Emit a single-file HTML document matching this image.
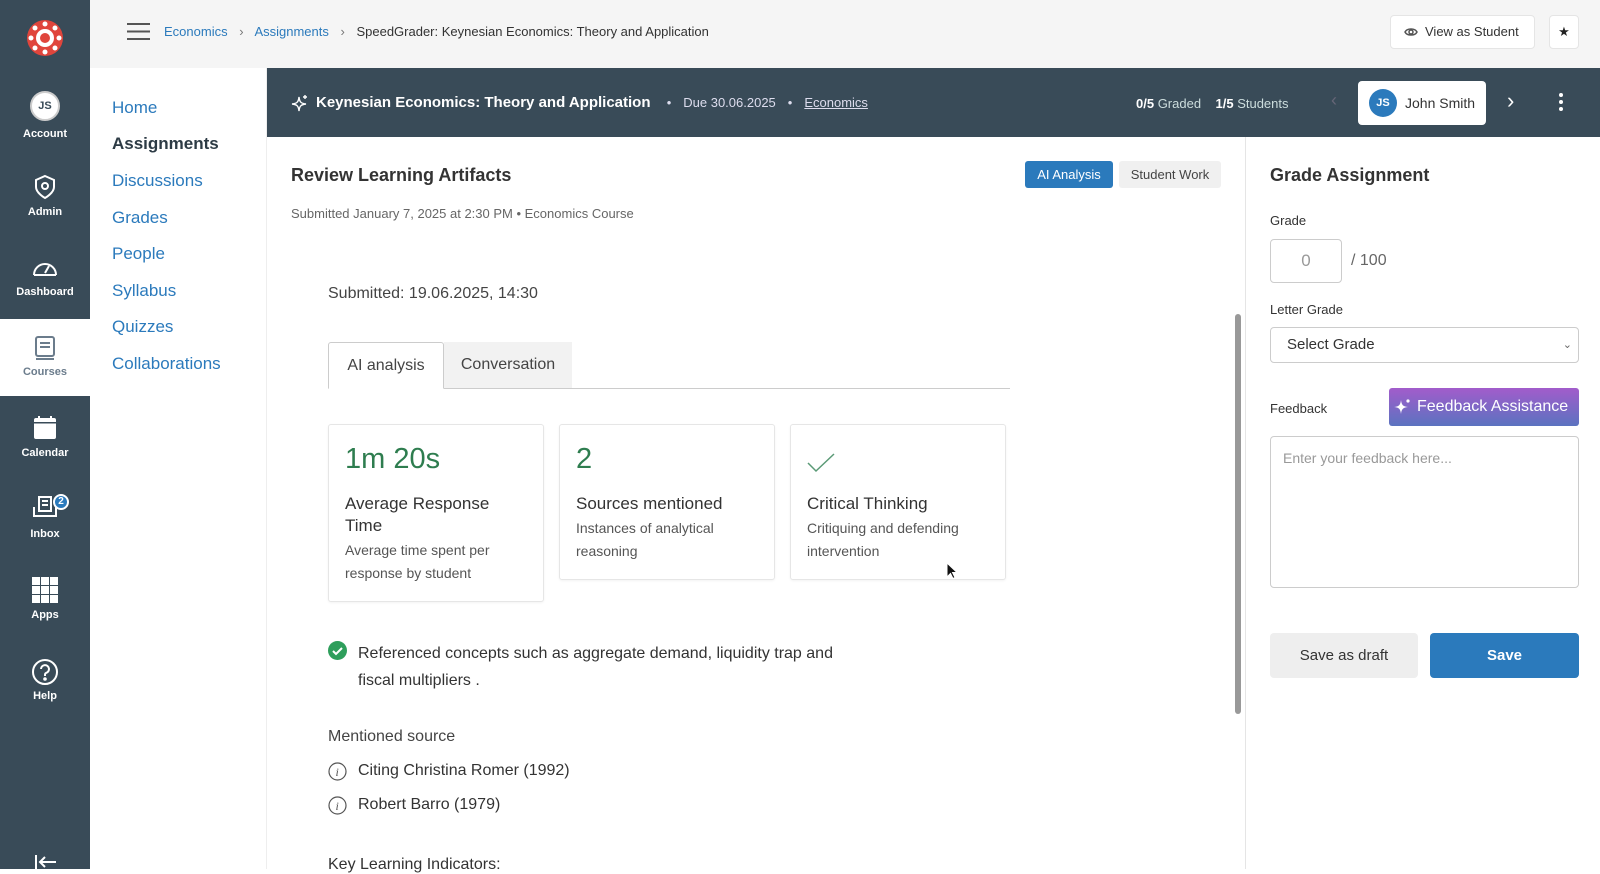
<!DOCTYPE html>
<html><head><style>
*{box-sizing:border-box;margin:0;padding:0}
body{width:1600px;height:869px;overflow:hidden;font-family:"Liberation Sans",sans-serif;background:#fff;position:relative;color:#2d3b45}
.a{position:absolute}
.side{left:0;top:0;width:90px;height:869px;background:#394b58}
.si{position:absolute;left:0;width:90px;text-align:center;color:#fff;font-size:11px;font-weight:bold}
.top{left:90px;top:0;width:1510px;height:68px;background:#f5f5f5}
.nav{left:90px;top:68px;width:177px;height:801px;background:#fff;border-right:1px solid #eee}
.nav div{position:absolute;left:22px;font-size:17px;color:#2b7abc}
.hdr{left:267px;top:68px;width:1333px;height:69px;background:#394b58;color:#fff}
.card{position:absolute;border:1px solid #e6e6e6;border-radius:3px;background:#fff;box-shadow:0 1px 2px rgba(0,0,0,.05)}
.card .n{position:absolute;left:16px;top:18px;font-size:29px;color:#2e7d4f}
.card .t{position:absolute;left:16px;top:68px;font-size:17px;color:#333;line-height:22px;width:180px}
.card .d{position:absolute;left:16px;font-size:14px;color:#555;line-height:23px;width:180px}
.btn{position:absolute;border-radius:4px;font-size:15px;text-align:center}
</style></head><body>
<div class="a side">
 <svg class="a" style="left:26px;top:19px" width="38" height="38" viewBox="0 0 38 38"><circle cx="19" cy="19" r="18" fill="#e0453c"/><circle cx="19" cy="19" r="9" fill="#fff"/><g fill="#fff"><circle cx="19" cy="5" r="2.5"/><circle cx="19" cy="33" r="2.5"/><circle cx="5" cy="19" r="2.5"/><circle cx="33" cy="19" r="2.5"/><circle cx="9" cy="9" r="2.5"/><circle cx="29" cy="9" r="2.5"/><circle cx="9" cy="29" r="2.5"/><circle cx="29" cy="29" r="2.5"/></g><circle cx="19" cy="19" r="5" fill="#e0453c"/></svg>
 <div class="a" style="left:30px;top:91px;width:30px;height:30px;border-radius:50%;background:#fff;border:2px solid #ccc;color:#394b58;font-size:11px;font-weight:bold;text-align:center;line-height:26px">JS</div>
 <div class="si" style="top:128px">Account</div>
 <svg class="a" style="left:33px;top:174px" width="24" height="26" viewBox="0 0 24 26" fill="none" stroke="#fff" stroke-width="2"><path d="M12 2 L21 6 V13 C21 19 12 24 12 24 C12 24 3 19 3 13 V6Z"/><circle cx="12" cy="12" r="3"/></svg>
 <div class="si" style="top:206px">Admin</div>
 <svg class="a" style="left:31px;top:257px" width="28" height="22" viewBox="0 0 28 22" fill="none" stroke="#fff" stroke-width="2"><path d="M3 18 A11 11 0 1 1 25 18"/><path d="M14 16 L18 9"/><path d="M3 18 H25"/></svg>
 <div class="si" style="top:286px">Dashboard</div>
 <div class="a" style="left:0;top:319px;width:90px;height:77px;background:#fff"></div>
 <svg class="a" style="left:33px;top:335px" width="24" height="27" viewBox="0 0 24 27" fill="none" stroke="#6b7c8c" stroke-width="2"><rect x="3" y="2" width="18" height="19" rx="2"/><path d="M7 8h10M7 12h10M3 24h18"/></svg>
 <div class="si" style="top:366px;color:#6b7c8c">Courses</div>
 <svg class="a" style="left:33px;top:415px" width="24" height="25" viewBox="0 0 24 25"><rect x="1" y="3" width="22" height="21" rx="2" fill="#fff"/><path d="M6 1v4M18 1v4" stroke="#fff" stroke-width="2"/><rect x="1" y="7" width="22" height="1.5" fill="#394b58"/></svg>
 <div class="si" style="top:447px">Calendar</div>
 <svg class="a" style="left:32px;top:494px" width="26" height="26" viewBox="0 0 26 26" fill="none" stroke="#fff" stroke-width="2"><rect x="7" y="3" width="12" height="14"/><path d="M10 7h6M10 11h6"/><path d="M2 13v9h22v-9"/></svg>
 <div class="a" style="left:53px;top:494px;width:16px;height:16px;border-radius:50%;background:#2b7abc;border:2px solid #fff;color:#fff;font-size:10px;font-weight:bold;text-align:center;line-height:12px">2</div>
 <div class="si" style="top:528px">Inbox</div>
 <svg class="a" style="left:32px;top:577px" width="26" height="26" viewBox="0 0 26 26" fill="#fff"><rect x="0" y="0" width="8" height="8"/><rect x="9" y="0" width="8" height="8"/><rect x="18" y="0" width="8" height="8"/><rect x="0" y="9" width="8" height="8"/><rect x="9" y="9" width="8" height="8"/><rect x="18" y="9" width="8" height="8"/><rect x="0" y="18" width="8" height="8"/><rect x="9" y="18" width="8" height="8"/><rect x="18" y="18" width="8" height="8"/></svg>
 <div class="si" style="top:609px">Apps</div>
 <svg class="a" style="left:31px;top:658px" width="28" height="28" viewBox="0 0 28 28" fill="none" stroke="#fff" stroke-width="2"><circle cx="14" cy="14" r="12"/><path d="M10 11a4 4 0 1 1 5 4c-1 .5-1 1-1 3"/><circle cx="14" cy="21" r=".8" fill="#fff"/></svg>
 <div class="si" style="top:690px">Help</div>
 <svg class="a" style="left:34px;top:855px" width="24" height="14" viewBox="0 0 24 14" fill="none" stroke="#fff" stroke-width="2"><path d="M2 0v14M6 7h16M11 2 6 7l5 5"/></svg>
</div>
<div class="a top">
 <svg class="a" style="left:37px;top:23px" width="23" height="17" viewBox="0 0 23 17" stroke="#555" stroke-width="2"><path d="M0 1h23M0 8.5h23M0 16h23"/></svg>
 <div class="a" style="left:74px;top:24px;font-size:13px;color:#2b7abc;white-space:nowrap">Economics <span style="color:#777;margin:0 8px">&#8250;</span> Assignments <span style="color:#777;margin:0 8px">&#8250;</span> <span style="color:#333">SpeedGrader: Keynesian Economics: Theory and Application</span></div>
 <div class="a" style="left:1300px;top:15px;width:145px;height:34px;background:#fff;border:1px solid #e5e5e5;border-radius:4px;font-size:13px;color:#333;line-height:32px;padding-left:34px">View as Student</div>
 <svg class="a" style="left:1314px;top:26px" width="14" height="12" viewBox="0 0 14 12" fill="none" stroke="#555" stroke-width="1.5"><path d="M1 6C3 2 11 2 13 6 11 10 3 10 1 6Z"/><circle cx="7" cy="6" r="2"/></svg>
 <div class="a" style="left:1459px;top:15px;width:30px;height:34px;background:#fff;border:1px solid #e5e5e5;border-radius:4px;font-size:13px;text-align:center;line-height:32px;color:#222">&#9733;</div>
</div>
<div class="a nav">
 <div style="top:30px">Home</div>
 <div style="top:66px;color:#2d3b45;font-weight:bold">Assignments</div>
 <div style="top:103px">Discussions</div>
 <div style="top:140px">Grades</div>
 <div style="top:176px">People</div>
 <div style="top:213px">Syllabus</div>
 <div style="top:249px">Quizzes</div>
 <div style="top:286px">Collaborations</div>
</div>
<div class="a hdr">
 <svg class="a" style="left:24px;top:26px" width="18" height="18" viewBox="0 0 18 18" fill="none" stroke="#fff" stroke-width="1.4"><path d="M8 3 C8.5 8 10 9.5 15 10 C10 10.5 8.5 12 8 17 C7.5 12 6 10.5 1 10 C6 9.5 7.5 8 8 3Z"/><path d="M14 1v4M12 3h4"/></svg>
 <div class="a" style="left:49px;top:26px;font-size:15px;font-weight:bold;white-space:nowrap">Keynesian Economics: Theory and Application <span style="font-weight:normal;font-size:13px;color:#dde;margin:0 12px">&bull;</span><span style="font-weight:normal;font-size:13px;color:#dde">Due 30.06.2025</span><span style="font-weight:normal;font-size:13px;color:#dde;margin:0 12px">&bull;</span><span style="font-weight:normal;font-size:13px;color:#dde;text-decoration:underline">Economics</span></div>
 <div class="a" style="left:869px;top:28px;font-size:13px;color:#cdd;white-space:nowrap"><b style="color:#fff">0/5</b> Graded &nbsp;&nbsp;&nbsp;<b style="color:#fff">1/5</b> Students</div>
 <div class="a" style="left:1064px;top:22px;font-size:18px;color:#667">&#8249;</div>
 <div class="a" style="left:1091px;top:13px;width:128px;height:44px;background:#fff;border-radius:4px"></div>
 <div class="a" style="left:1102px;top:21px;width:28px;height:28px;border-radius:50%;background:#2b7abc;color:#fff;font-size:11px;font-weight:bold;text-align:center;line-height:28px">JS</div>
 <div class="a" style="left:1138px;top:27px;font-size:14px;color:#333">John Smith</div>
 <div class="a" style="left:1240px;top:20px;font-size:22px;color:#fff">&#8250;</div>
 <svg class="a" style="left:1292px;top:25px" width="4" height="18"><circle cx="2" cy="2" r="2" fill="#fff"/><circle cx="2" cy="9" r="2" fill="#fff"/><circle cx="2" cy="16" r="2" fill="#fff"/></svg>
</div>
<!-- main -->
<div class="a" style="left:291px;top:165px;font-size:18px;font-weight:bold;color:#333">Review Learning Artifacts</div>
<div class="a" style="left:291px;top:206px;font-size:13px;color:#666">Submitted January 7, 2025 at 2:30 PM &bull; Economics Course</div>
<div class="btn" style="left:1025px;top:161px;width:88px;height:27px;background:#2b7abc;color:#fff;font-size:13px;line-height:27px;border-radius:3px">AI Analysis</div>
<div class="btn" style="left:1119px;top:161px;width:102px;height:27px;background:#f0f0f0;color:#444;font-size:13px;line-height:27px;border-radius:3px">Student Work</div>
<div class="a" style="left:328px;top:285px;font-size:16px;color:#444">Submitted: 19.06.2025, 14:30</div>
<div class="a" style="left:328px;top:388px;width:682px;height:1px;background:#ccc"></div>
<div class="a" style="left:328px;top:342px;width:116px;height:47px;border:1px solid #ccc;border-bottom:1px solid #fff;background:#fff;border-radius:3px 3px 0 0;font-size:16px;color:#444;text-align:center;line-height:46px">AI analysis</div>
<div class="a" style="left:444px;top:342px;width:128px;height:46px;background:#f2f2f2;font-size:16px;color:#444;text-align:center;line-height:46px">Conversation</div>
<div class="card" style="left:328px;top:424px;width:216px;height:178px"><div class="n">1m 20s</div><div class="t">Average Response Time</div><div class="d" style="top:114px">Average time spent per response by student</div></div>
<div class="card" style="left:559px;top:424px;width:216px;height:156px"><div class="n">2</div><div class="t">Sources mentioned</div><div class="d" style="top:92px">Instances of analytical reasoning</div></div>
<div class="card" style="left:790px;top:424px;width:216px;height:156px"><svg class="a" style="left:16px;top:28px" width="28" height="20" viewBox="0 0 28 20" fill="none" stroke="#5a9a76" stroke-width="1.5"><path d="M1 10l8 8L27 1"/></svg><div class="t">Critical Thinking</div><div class="d" style="top:92px">Critiquing and defending intervention</div></div>
<svg class="a" style="left:328px;top:641px" width="19" height="19"><circle cx="9.5" cy="9.5" r="9.5" fill="#2e9e5b"/><path d="M5 10l3 3 6-6" stroke="#fff" stroke-width="2" fill="none"/></svg>
<div class="a" style="left:358px;top:640px;font-size:16px;color:#333;line-height:27px;width:480px">Referenced concepts such as aggregate demand, liquidity trap and fiscal multipliers .</div>
<div class="a" style="left:328px;top:728px;font-size:16px;color:#444">Mentioned source</div>
<svg class="a" style="left:328px;top:762px" width="19" height="19"><circle cx="9.5" cy="9.5" r="8.5" fill="none" stroke="#555" stroke-width="1.2"/><text x="7.5" y="14" font-size="12" font-style="italic" fill="#555" font-family="Liberation Serif">i</text></svg>
<div class="a" style="left:358px;top:762px;font-size:16px;color:#333">Citing Christina Romer (1992)</div>
<svg class="a" style="left:328px;top:796px" width="19" height="19"><circle cx="9.5" cy="9.5" r="8.5" fill="none" stroke="#555" stroke-width="1.2"/><text x="7.5" y="14" font-size="12" font-style="italic" fill="#555" font-family="Liberation Serif">i</text></svg>
<div class="a" style="left:358px;top:796px;font-size:16px;color:#333">Robert Barro (1979)</div>
<div class="a" style="left:328px;top:856px;font-size:16px;color:#333">Key Learning Indicators:</div>
<div class="a" style="left:1235px;top:314px;width:6px;height:400px;background:#999;border-radius:3px"></div>
<div class="a" style="left:1245px;top:137px;width:1px;height:732px;background:#e5e5e5"></div>
<!-- right -->
<div class="a" style="left:1270px;top:165px;font-size:18px;font-weight:bold;color:#333">Grade Assignment</div>
<div class="a" style="left:1270px;top:213px;font-size:13px;color:#333">Grade</div>
<div class="a" style="left:1270px;top:239px;width:72px;height:44px;border:1px solid #ccc;border-radius:4px;font-size:17px;color:#999;text-align:center;line-height:42px">0</div>
<div class="a" style="left:1351px;top:252px;font-size:16px;color:#666">/ 100</div>
<div class="a" style="left:1270px;top:302px;font-size:13px;color:#333">Letter Grade</div>
<div class="a" style="left:1270px;top:327px;width:309px;height:36px;border:1px solid #ccc;border-radius:4px;font-size:15px;color:#333;line-height:34px;padding-left:16px">Select Grade<span style="position:absolute;right:6px;font-size:11px;color:#666">&#8964;</span></div>
<div class="a" style="left:1270px;top:401px;font-size:13px;color:#333">Feedback</div>
<div class="a" style="left:1389px;top:388px;width:190px;height:38px;border-radius:3px;background:linear-gradient(180deg,#a25ccb,#5b73c0);color:#fff;font-size:16px;line-height:38px;padding-left:28px;white-space:nowrap">Feedback Assistance</div>
<svg class="a" style="left:1393px;top:398px" width="20" height="18" viewBox="0 0 20 18" fill="#fff"><path d="M8 2C8.6 7 10 8.5 15 9 10 9.5 8.6 11 8 16 7.4 11 6 9.5 1 9 6 8.5 7.4 7 8 2Z"/><circle cx="15" cy="3" r="1.6"/></svg>
<div class="a" style="left:1270px;top:436px;width:309px;height:152px;border:1px solid #ccc;border-radius:4px;font-size:14px;color:#999;padding:13px 12px">Enter your feedback here...</div>
<div class="btn" style="left:1270px;top:633px;width:148px;height:45px;background:#eee;color:#333;line-height:45px">Save as draft</div>
<div class="btn" style="left:1430px;top:633px;width:149px;height:45px;background:#2b7abc;color:#fff;font-weight:bold;line-height:45px">Save</div>
<svg class="a" style="left:946px;top:562px" width="12" height="18" viewBox="0 0 12 18"><path d="M1 1v14l3.5-3.5 2.5 5 2-1-2.5-5H11Z" fill="#111" stroke="#fff" stroke-width="1"/></svg>
</body></html>
